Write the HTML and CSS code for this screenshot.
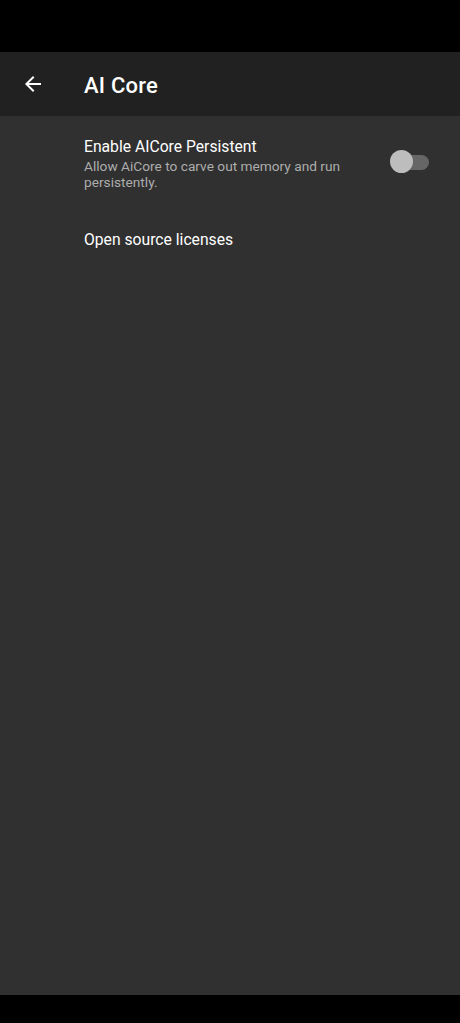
FILE: index.html
```html
<!DOCTYPE html>
<html>
<head>
<meta charset="utf-8">
<link rel="stylesheet" href="styles.css">
</head>
<body>
<div class="screen">
  <div class="statusbar"></div>
  <header class="toolbar">
    <div class="back">
      <svg width="24" height="24" viewBox="0 0 24 24"><path d="M20 11H7.83l5.59-5.59L12 4l-8 8 8 8 1.41-1.41L7.83 13H20v-2z" fill="#fff"/></svg>
    </div>
    <h1 class="title">AI Core</h1>
  </header>
  <main class="content">
    <div class="pref pref-switch">
      <div class="pref-text">
        <div class="pref-title">Enable AICore Persistent</div>
        <div class="pref-summary">Allow AiCore to carve out memory and run persistently.</div>
      </div>
      <div class="switch"><span class="track"></span><span class="thumb"></span></div>
    </div>
    <div class="pref pref-plain">
      <div class="pref-title">Open source licenses</div>
    </div>
  </main>
  <div class="navbar"></div>
</div>
</body>
</html>
```
FILE: styles.css
```css
html, body { margin: 0; padding: 0; background: #000; }
body { font-family: Roboto, "Noto Sans", sans-serif; }
.screen { width: 460px; height: 1023px; display: flex; flex-direction: column; }
.statusbar { height: 52px; background: #000; flex: none; }
.toolbar { height: 64px; background: #212121; display: flex; align-items: center; flex: none; }
.back { width: 84px; display: flex; align-items: center; padding-left: 21px; box-sizing: border-box; height: 100%; }
.back svg { display: block; }
.title { margin: 0; color: #fff; font-size: 22px; font-weight: 500; letter-spacing: 0.2px; padding-top: 2px; }
.content { flex: 1; background: #303030; padding-top: 21px; }
.pref { padding-left: 84px; }
.pref-switch { display: flex; align-items: flex-start; padding-right: 30px; }
.pref-text { flex: 1; }
.pref-title { color: #fff; font-size: 15.7px; line-height: 20px; }
.pref-summary { color: #adadad; font-size: 13.7px; line-height: 16px; margin-top: 1px; width: 290px; }
.switch { position: relative; width: 40px; height: 24px; margin-top: 13px; }
.track { position: absolute; left: 5px; top: 5px; width: 34px; height: 15px; border-radius: 8px; background: #666; }
.thumb { position: absolute; left: 0; top: 0; width: 23px; height: 23px; border-radius: 50%; background: #bdbdbd; }
.pref-plain { margin-top: 40px; }
.navbar { height: 28px; background: #000; flex: none; }
```
